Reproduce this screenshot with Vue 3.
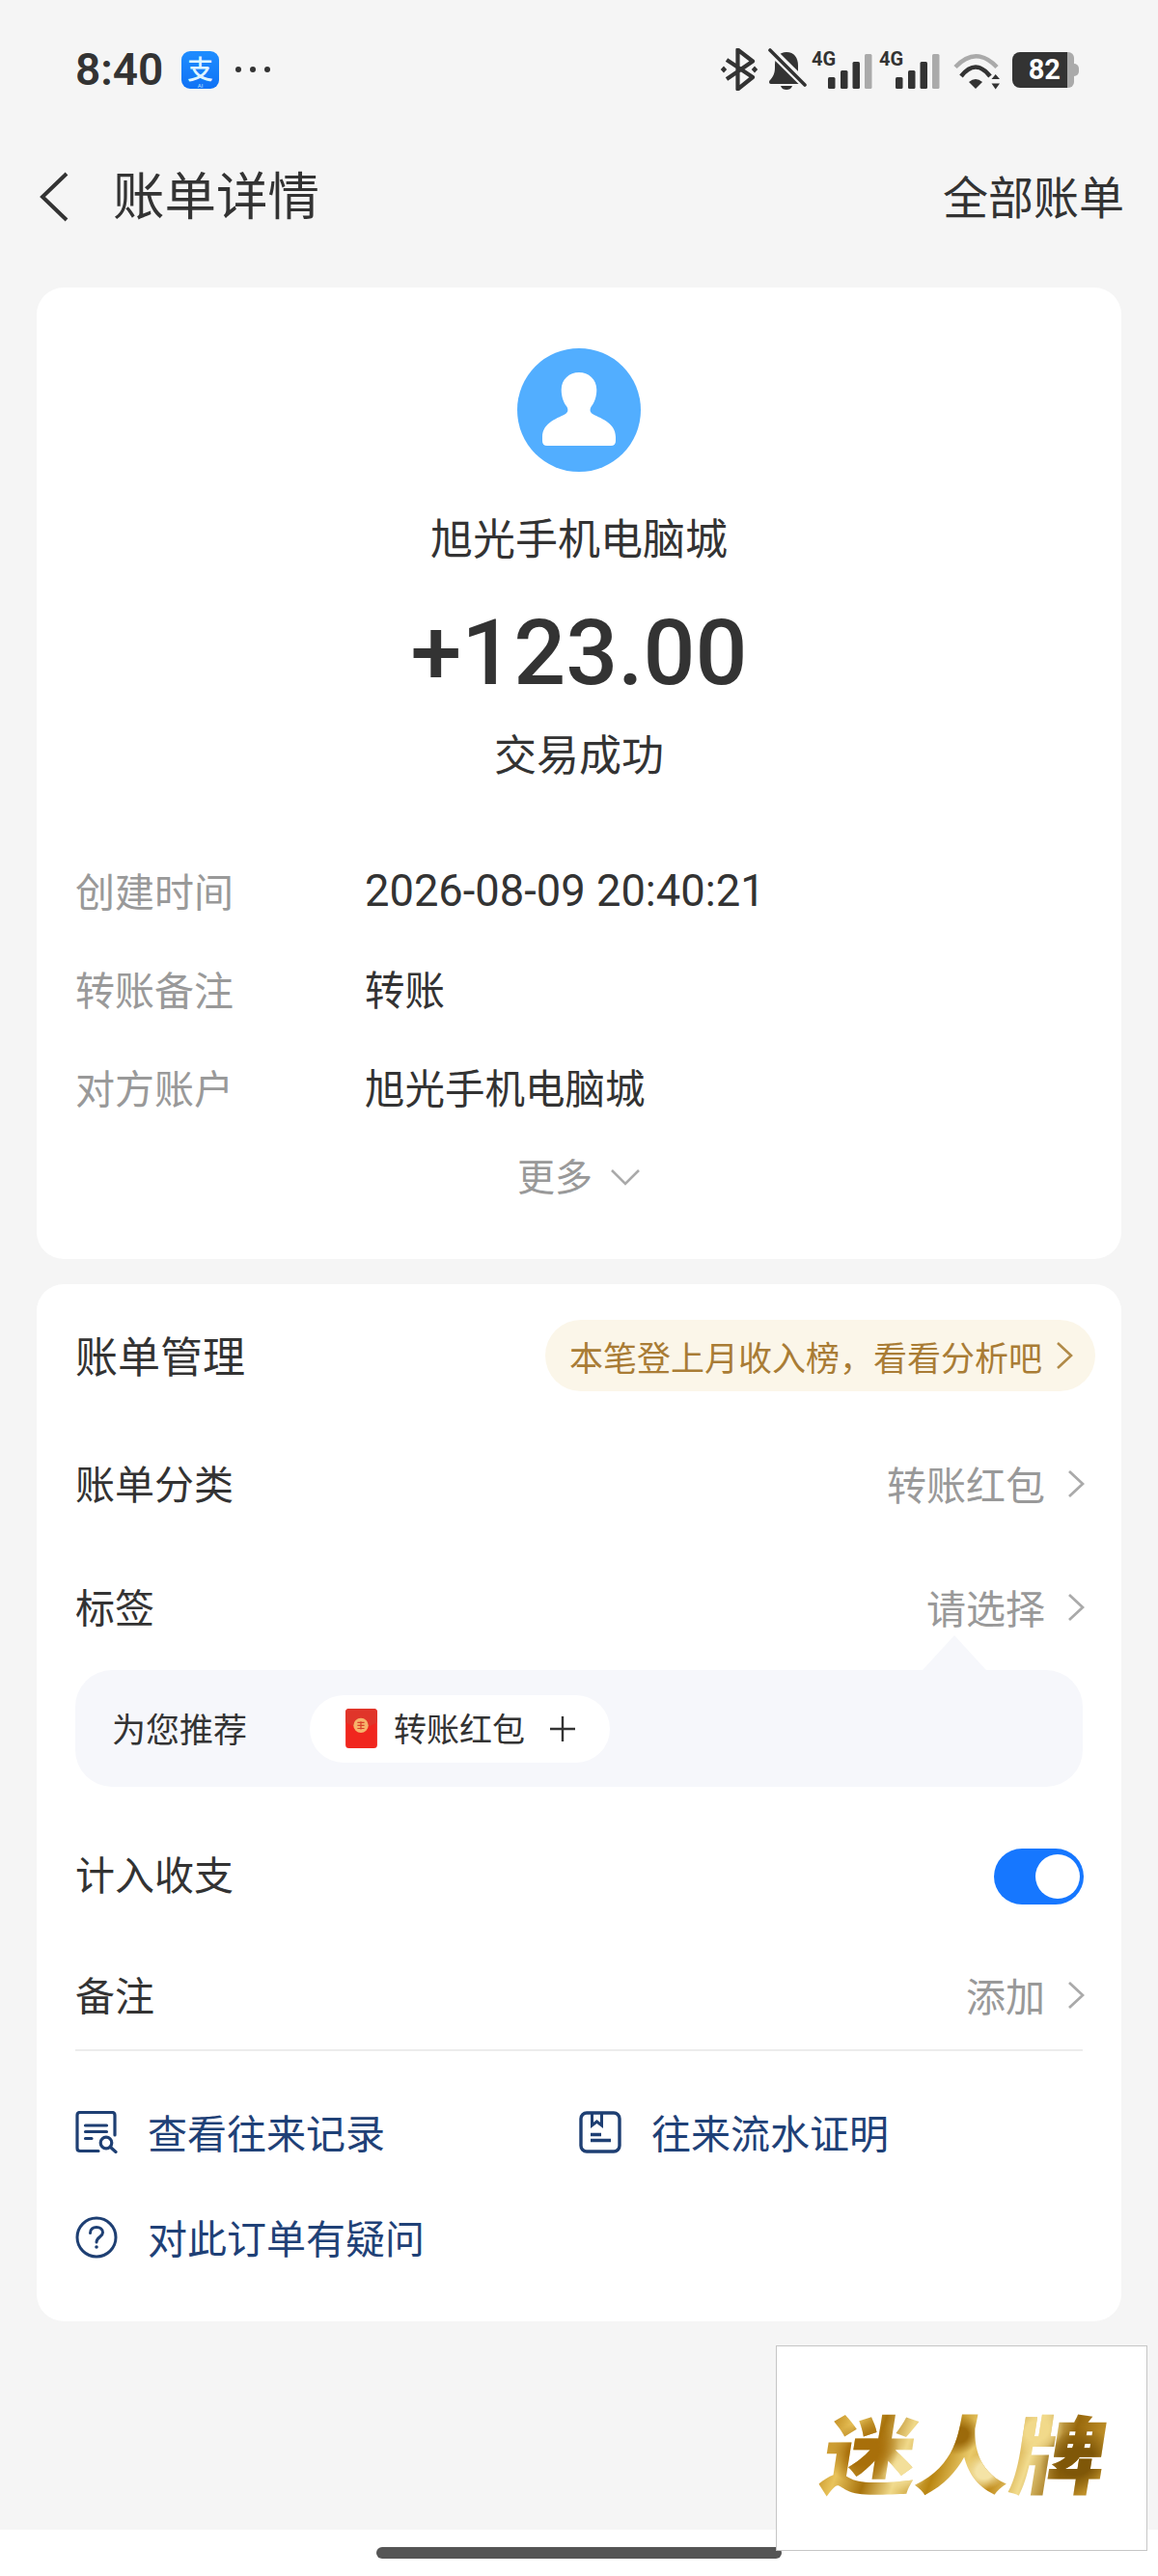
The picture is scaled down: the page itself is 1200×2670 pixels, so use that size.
<script setup>
const infoRows = [
  { label: '创建时间', value: '2026-08-09 20:40:21', latin: true },
  { label: '转账备注', value: '转账' },
  { label: '对方账户', value: '旭光手机电脑城' },
]
const signalBars = [
  { x: 17, y: 30, h: 12, c: '#333' },
  { x: 30, y: 23, h: 19, c: '#333' },
  { x: 42.5, y: 14, h: 28, c: '#333' },
  { x: 55, y: 6, h: 36, c: '#aaa' },
]
</script>

<template>
  <div class="page">
    <div class="status">
      <div class="status-left">
        <span class="time">8:40</span>
        <span class="alipay"><b>支</b><small>AI</small></span>
        <span class="dots"><i></i><i></i><i></i></span>
      </div>
      <div class="status-right">
        <svg class="ic-bt" width="40" height="44" viewBox="0 0 40 44">
          <path d="M7 12 34 30 18.5 42.5V1.5L34 13.5 7 32" fill="none" stroke="#333" stroke-width="4.2" stroke-linejoin="round" />
          <path d="M4 18.5 7.2 22 4 25.5 .8 22ZM36 18.5 39.2 22 36 25.5 32.800 22Z" fill="#333" />
        </svg>
        <svg class="ic-bell" width="41" height="44" viewBox="0 0 41 44">
          <path d="M19 4C27 4 31 10 31 18V25L36 33C37 35 36 37 34 37H3C1 37 .5 35 1.500 33.500 5 30 7 26 7 20V17C7 9 12 4 19 4Z" fill="#333" />
          <path d="M13 39H25C24 42 21.500 43 19 43S14 42 13 39Z" fill="#333" />
          <path d="M1 .5 39 38" stroke="#f5f5f5" stroke-width="9" />
          <path d="M2 2 38 38" stroke="#333" stroke-width="3.600" stroke-linecap="round" />
        </svg>
        <svg v-for="n in 2" :key="n" class="ic-sig" width="64" height="44" viewBox="0 0 64 44">
          <text x="0" y="18" class="sig-text">4G</text>
          <rect v-for="b in signalBars" :key="b.x" :x="b.x" :y="b.y" width="7.500" :height="b.h" rx="1.500" :fill="b.c" />
        </svg>
        <svg class="ic-wifi" width="52" height="44" viewBox="0 0 52 44">
          <path d="M4 19.500Q25.500-3 47 19.500" fill="none" stroke="#aaa" stroke-width="4.500" />
          <path d="M10 29Q25 10 40 29" fill="none" stroke="#333" stroke-width="4.500" />
          <path d="M18 35Q25 29 32 35L25 42Z" fill="#333" />
          <path d="M45.700 27 50 32H41.500ZM41.500 36.500H50L45.700 42.500Z" fill="#333" />
        </svg>
        <div class="battery">
          <span class="bat-num">82</span>
          <span class="bat-rest"></span>
          <span class="bat-nub"></span>
        </div>
      </div>
    </div>

    <div class="nav">
      <div class="nav-left">
        <svg width="32" height="52" viewBox="0 0 32 52">
          <path d="M29 2 4 26 29 50" fill="none" stroke="#333" stroke-width="4" />
        </svg>
        <span class="nav-title">账单详情</span>
      </div>
      <span class="nav-link">全部账单</span>
    </div>

    <section class="card card-top">
      <svg class="avatar" width="128" height="128" viewBox="0 0 128 128">
        <circle cx="64" cy="64" r="64" fill="#52aeff" />
        <path d="M64 25C74 25 82.300 32 82.300 43 82.300 50 80 56 77 60 75 63 75 66 78 68 84 72 102 76 102 92V96Q102 101 97 101H31Q26 101 26 96V92C26 76 44 72 50 68 53 66 53 63 51 60 48 56 45.700 50 45.700 43 45.700 32 54 25 64 25Z" fill="#fff" />
      </svg>
      <div class="name">旭光手机电脑城</div>
      <div class="amount">+123.00</div>
      <div class="state">交易成功</div>
      <div class="info">
        <div v-for="r in infoRows" :key="r.label" class="info-row">
          <span class="info-label">{{ r.label }}</span>
          <span class="info-value" :class="{ latin: r.latin }">{{ r.value }}</span>
        </div>
      </div>
      <div class="more">
        <span>更多</span>
        <svg width="32" height="18" viewBox="0 0 32 18">
          <path d="M2 2 16 16 30 2" fill="none" stroke="#aaa" stroke-width="2.600" />
        </svg>
      </div>
    </section>

    <section class="card card-manage">
      <div class="row row-head">
        <span class="head-title">账单管理</span>
        <div class="pill">
          <span>本笔登上月收入榜，看看分析吧</span>
          <svg width="18" height="30" viewBox="0 0 18 30">
            <path d="M2 2 16 15 2 28" fill="none" stroke="#b08a48" stroke-width="2.600" />
          </svg>
        </div>
      </div>

      <div class="row row-cat">
        <span class="label">账单分类</span>
        <div class="value">
          <span>转账红包</span>
          <svg width="18" height="30" viewBox="0 0 18 30">
            <path d="M2 2 16 15 2 28" fill="none" stroke="#aaa" stroke-width="2.800" />
          </svg>
        </div>
      </div>

      <div class="row row-tag">
        <span class="label">标签</span>
        <div class="value">
          <span>请选择</span>
          <svg width="18" height="30" viewBox="0 0 18 30">
            <path d="M2 2 16 15 2 28" fill="none" stroke="#aaa" stroke-width="2.800" />
          </svg>
        </div>
      </div>

      <div class="panel">
        <span class="notch"></span>
        <span class="panel-label">为您推荐</span>
        <div class="chip">
          <svg width="33" height="41" viewBox="0 0 32 40">
            <rect width="32" height="40" rx="3.500" fill="#f0261e" />
            <path d="M0 3.500Q0 0 3.500 0H28.500Q32 0 32 3.500V14L16 22 0 14Z" fill="#e0352a" />
            <circle cx="15.500" cy="17" r="7.500" fill="#f7b36b" />
            <path d="M12 14H19M12 17H19M12 20H19M15.500 13V21" stroke="#d9412b" stroke-width="1.200" />
          </svg>
          <span>转账红包</span>
          <svg class="plus" width="26" height="26" viewBox="0 0 26 26">
            <path d="M13 0V26M0 13H26" stroke="#333" stroke-width="2.400" />
          </svg>
        </div>
      </div>

      <div class="row row-toggle">
        <span class="label">计入收支</span>
        <span class="toggle"><i></i></span>
      </div>

      <div class="row row-note">
        <span class="label">备注</span>
        <div class="value">
          <span>添加</span>
          <svg width="18" height="30" viewBox="0 0 18 30">
            <path d="M2 2 16 15 2 28" fill="none" stroke="#aaa" stroke-width="2.800" />
          </svg>
        </div>
      </div>

      <div class="divider"></div>

      <div class="links">
        <a class="link">
          <svg width="44" height="44" viewBox="0 0 44 44" fill="none" stroke="#1e3f73" stroke-width="3.200" stroke-linecap="round">
            <path d="M24 41.500H5Q2 41.500 2 38.500V4.500Q2 1.500 5 1.500H38Q41 1.500 41 4.500V25" />
            <path d="M10.500 15H32.500M10.500 21.500H32.500M10.500 28.500H17" />
            <circle cx="32" cy="33" r="5.800" />
            <path d="M36.500 37.500 42 42.500" />
          </svg>
          <span>查看往来记录</span>
        </a>
        <a class="link">
          <svg width="44" height="44" viewBox="0 0 44 44" fill="none" stroke="#1e3f73" stroke-width="3.400">
            <rect x="2" y="2" width="40" height="40" rx="6" />
            <path d="M13.500 2V15L18.500 11 23.500 15V2" stroke-width="3" />
            <path d="M12 24.500H23M12 30.500H33" stroke-linecap="butt" />
          </svg>
          <span>往来流水证明</span>
        </a>
      </div>
      <a class="link link-help">
        <svg width="44" height="44" viewBox="0 0 44 44" fill="none" stroke="#1e3f73" stroke-width="3">
          <circle cx="22" cy="22" r="20" />
          <path d="M15.500 17.500C15.500 13.500 18.500 11.500 22 11.500 25.500 11.500 28.500 13.500 28.500 17 28.500 21.500 22 21.500 22 27" stroke-linecap="round" />
          <circle cx="22" cy="32" r="1.800" fill="#1e3f73" stroke="none" />
        </svg>
        <span>对此订单有疑问</span>
      </a>
    </section>

    <div class="spacer"></div>
    <div class="home"><span class="home-bar"></span></div>

    <div class="stamp"><span class="stamp-text">迷人牌</span></div>
  </div>
</template>

<style>
html, body { margin: 0; background: #f5f5f5; }
</style>

<style scoped>
.page {
  position: relative;
  width: 1200px;
  height: 2670px;
  overflow: hidden;
  background: #f5f5f5;
  color: #333;
  display: flex;
  flex-direction: column;
  font-family: Roboto, "Noto Sans CJK SC", sans-serif;
}
.status {
  height: 140px;
  flex: none;
  box-sizing: border-box;
  display: flex;
  justify-content: space-between;
  align-items: center;
  padding: 4px 82px 0 78px;
}
.status-left { display: flex; align-items: center; }
.time { font-size: 46px; font-weight: 600; width: 110px; }
.alipay {
  position: relative;
  width: 39px;
  height: 39px;
  border-radius: 9px;
  background: linear-gradient(180deg, #1f8dff, #0f72f5);
  color: #dff5ff;
  text-align: center;
}
.alipay b {
  display: block;
  font-family: "Noto Sans CJK SC", sans-serif;
  font-size: 27px;
  font-weight: 500;
  line-height: 36px;
}
.alipay small {
  position: absolute;
  left: 0;
  right: 0;
  bottom: 0;
  font-size: 6px;
  line-height: 7px;
  color: #bfe2ff;
}
.dots { display: flex; gap: 9px; margin-left: 17px; }
.dots i { width: 6px; height: 6px; border-radius: 50%; background: #333; }
.status-right { display: flex; align-items: center; }
.ic-bell { margin-left: 10px; }
.ic-sig { margin-left: 4px; }
.ic-sig + .ic-sig { margin-left: 6px; }
.ic-wifi { margin-left: 11px; }
.sig-text { font: 700 20px Roboto, sans-serif; fill: #333; }
.battery { position: relative; width: 69px; height: 37px; margin-left: 11px; }
.bat-num {
  position: absolute;
  left: 0;
  top: 0;
  width: 57px;
  height: 37px;
  border-radius: 8px 0 0 8px;
  background: #333;
  color: #fff;
  font-size: 29px;
  font-weight: 700;
  line-height: 37px;
  text-align: right;
  padding-right: 7px;
  box-sizing: border-box;
}
.bat-rest {
  position: absolute;
  left: 57px;
  top: 0;
  width: 7px;
  height: 37px;
  background: #aaa;
  border-radius: 0 6px 6px 0;
}
.bat-nub {
  position: absolute;
  left: 64px;
  top: 12px;
  width: 5px;
  height: 13px;
  background: #aaa;
  border-radius: 0 5px 5px 0;
}
.nav {
  height: 128px;
  flex: none;
  display: flex;
  justify-content: space-between;
  align-items: center;
  padding: 0 35px 0 40px;
}
.nav-left { display: flex; align-items: center; gap: 45px; }
.nav-title { font-size: 53.5px; line-height: 64px; margin-top: 1px; }
.nav-link { font-size: 47px; line-height: 60px; margin-top: 4px; }

.card {
  margin: 0 38px;
  background: #fff;
  border-radius: 28px;
  flex: none;
}
.card-top {
  margin-top: 30px;
  height: 1007px;
  box-sizing: border-box;
  padding-top: 63px;
  display: flex;
  flex-direction: column;
  align-items: center;
}
.avatar { flex: none; }
.name { font-size: 44px; line-height: 60px; margin-top: 41px; }
.amount { font-size: 95px; font-weight: 500; line-height: 110px; margin-top: 32px; }
.state { font-size: 44px; line-height: 60px; margin-top: 22px; }
.info { align-self: stretch; margin-top: 58px; padding: 0 40px; }
.info-row { display: flex; align-items: center; height: 102px; font-size: 41.5px; }
.info-label { width: 300px; color: #999; padding-bottom: 3px; font-size: 41px; }
.info-value { color: #333; padding-bottom: 2px; }
.info-value.latin { font-size: 45.3px; padding-bottom: 0; }
.more {
  display: flex;
  align-items: center;
  gap: 18px;
  margin-top: 14px;
  height: 50px;
  font-size: 39px;
  color: #999;
}
.more svg { margin-top: 6px; }

.card-manage {
  margin-top: 26px;
  height: 1075px;
  box-sizing: border-box;
  padding: 0 40px;
}
.row { display: flex; align-items: center; justify-content: space-between; }
.row-head { height: 148px; }
.row-cat { height: 118px; margin-bottom: 4px; }
.row-tag { height: 130px; }
.row-toggle { height: 100px; margin-top: 41px; }
.row-note { height: 100px; margin-top: 25px; margin-bottom: 6px; }
.head-title { font-size: 44px; padding-bottom: 3px; }
.label { font-size: 41px; padding-bottom: 4px; }
.pill {
  display: flex;
  align-items: center;
  gap: 14px;
  height: 74px;
  width: 570px;
  box-sizing: border-box;
  padding-left: 25px;
  margin-right: -13px;
  border-radius: 37px;
  background: #fbf6e9;
  color: #a97c35;
  font-size: 35px;
}
.value {
  display: flex;
  align-items: center;
  gap: 23px;
  margin-right: -2px;
  font-size: 41px;
  color: #999;
}
.value span { padding-bottom: 2px; }
.panel {
  position: relative;
  height: 121px;
  border-radius: 38px;
  background: #f6f7fb;
  display: flex;
  align-items: center;
  padding-left: 38px;
  font-size: 35px;
}
.notch {
  position: absolute;
  left: 878px;
  top: -36px;
  width: 0;
  height: 0;
  border-left: 33px solid transparent;
  border-right: 33px solid transparent;
  border-bottom: 36px solid #f6f7fb;
}
.panel-label { width: 205px; padding-bottom: 2px; }
.chip {
  display: flex;
  align-items: center;
  height: 70px;
  width: 311px;
  box-sizing: border-box;
  padding-left: 37px;
  border-radius: 35px;
  background: #fff;
  font-size: 34px;
}
.chip span { margin-left: 17px; padding-bottom: 2px; }
.chip .plus { margin-left: 26px; }
.toggle {
  position: relative;
  width: 93px;
  height: 58px;
  margin: 3px -1px 0 0;
  border-radius: 29px;
  background: #1677ff;
}
.toggle i {
  position: absolute;
  right: 4px;
  top: 6px;
  width: 46px;
  height: 46px;
  border-radius: 50%;
  background: #fff;
}
.divider { height: 2px; background: #ececec; }
.links { display: flex; margin-top: 54px; }
.link {
  display: flex;
  align-items: center;
  gap: 31px;
  height: 60px;
  font-size: 41px;
  color: #1f4177;
}
.link span { padding-bottom: 3px; }
.links .link { width: 522px; }
.link-help { margin-top: 49px; }

.spacer { flex: 1; }
.home {
  flex: none;
  height: 48px;
  background: #fff;
  padding: 18px 0 0 390px;
  box-sizing: border-box;
}
.home-bar {
  display: block;
  width: 420px;
  height: 12px;
  border-radius: 6px;
  background: #555;
}
.stamp {
  position: absolute;
  left: 804px;
  top: 2431px;
  width: 385px;
  height: 213px;
  box-sizing: border-box;
  border: 1.500px solid #c6c6c6;
  background: #fff;
  display: flex;
  align-items: center;
  justify-content: center;
}
.stamp-text {
  display: block;
  font-family: "Noto Sans CJK SC", sans-serif;
  font-size: 98px;
  font-weight: 900;
  line-height: 110px;
  white-space: nowrap;
  transform: translateX(5px) skewX(-9deg) scaleY(.9);
  margin-top: 2px;
  background:
    radial-gradient(circle at 14% 52%, #a86f0a 0 6%, transparent 14%),
    radial-gradient(circle at 30% 70%, #f3df9a 0 5%, transparent 12%),
    radial-gradient(circle at 47% 35%, #9c6a0b 0 5%, transparent 13%),
    radial-gradient(circle at 58% 72%, #f4e3a6 0 5%, transparent 12%),
    radial-gradient(circle at 74% 30%, #f1d98a 0 5%, transparent 12%),
    radial-gradient(circle at 90% 62%, #7f5708 0 6%, transparent 14%),
    linear-gradient(100deg, #b67d10 0%, #e9c45c 10%, #a8730c 20%, #f0d98a 30%, #b98511 42%, #eacb6c 52%, #c08a18 62%, #f2dc8f 72%, #98680c 84%, #d3a53a 100%);
  -webkit-background-clip: text;
  background-clip: text;
  color: transparent;
}
</style>
